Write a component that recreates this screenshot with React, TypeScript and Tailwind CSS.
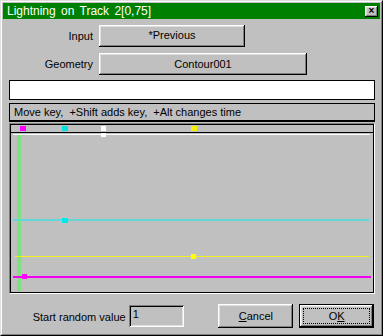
import React from "react";

const btn =
  "flex items-center justify-center bg-[#c0c0c0] shadow-[inset_-1px_-1px_0_#000,inset_1px_1px_0_#fff,inset_-2px_-2px_0_#808080,inset_2px_2px_0_#dfdfdf]";

function Graph() {
  return (
    <svg width={362} height={167} viewBox="11 125 362 167" className="block">
      <rect x={11} y={125} width={362} height={167} fill="#c0c0c0" />
      {/* key markers strip */}
      <rect x={20} y={126} width={6} height={5} fill="#ff00ff" />
      <rect x={62} y={126} width={6} height={5} fill="#00e0e0" />
      <rect x={101} y={126} width={5} height={5} fill="#ffffff" />
      <rect x={191} y={126} width={6} height={5} fill="#f0f000" />
      <rect x={11} y={132} width={362} height={1} fill="#000" />
      {/* green time line */}
      <rect x={17} y={134} width={4} height={157} fill="#80e080" />
      {/* white track */}
      <rect x={13} y={134} width={357} height={1} fill="#ffffff" />
      <rect x={101} y={133} width={5} height={4} fill="#ffffff" />
      {/* cyan */}
      <rect x={13} y={219} width={356} height={2} fill="#60d8d8" />
      <rect x={62} y={218} width={6} height={5} fill="#00e8e8" />
      {/* yellow */}
      <rect x={15} y={256} width={354} height={1} fill="#f0f020" />
      <rect x={191} y={254} width={5} height={5} fill="#ffff00" />
      {/* magenta */}
      <rect x={13} y={276} width={358} height={2} fill="#f000f0" />
      <rect x={22} y={274} width={5} height={5} fill="#ff00ff" />
    </svg>
  );
}

export default function App() {
  return (
    <div
      className="w-[383px] h-[336px] bg-[#c0c0c0] border border-t-[#dfdfdf] border-l-[#dfdfdf] border-r-black border-b-black text-black"
      style={{ fontFamily: '"Liberation Sans", Arial, sans-serif' }}
    >
      <div className="h-full border border-t-white border-l-white border-r-[#808080] border-b-[#808080] p-px flex flex-col">
        {/* title bar */}
        <div className="h-[16px] bg-[#008000] flex items-center justify-between pl-[4px] pr-[2px]">
          <span className="text-white text-[12px] leading-none [word-spacing:2px]">
            Lightning on Track 2[0,75]
          </span>
          <div className={`${btn} w-[13px] h-[11px] text-[10px] font-bold leading-none`}>
            ×
          </div>
        </div>
        <div className="flex flex-col px-[6px] text-[11px]">
          <div className="flex items-center mt-[6px] h-[22px]">
            <div className="w-[90px] text-right pr-[6px]">Input</div>
            <div className={`${btn} w-[146px] h-[22px] pb-[2px]`}>*Previous</div>
          </div>
          <div className="flex items-center mt-[6px] h-[22px]">
            <div className="w-[90px] text-right pr-[6px]">Geometry</div>
            <div className={`${btn} w-[208px] h-[22px]`}>Contour001</div>
          </div>
          <div className="mt-[5px] h-[20px] w-[366px] bg-white border border-black" />
          <div className="mt-[3px] h-[19px] w-[366px] border border-black border-b-2 flex items-center pl-[4px]">
            Move key,&nbsp; +Shift adds key,&nbsp; +Alt changes time
          </div>
          <div className="mt-[1px] w-[366px] h-[171px] border border-t-[#808080] border-l-[#808080] border-r-white border-b-white">
            <div className="w-[364px] h-[169px] border border-black">
              <Graph />
            </div>
          </div>
          <div className="flex items-center mt-[10px] h-[24px]">
            <div className="w-[120px] text-right pr-[3px] pt-[2px]">Start random value</div>
            <div className="w-[56px] h-[22px] shadow-[inset_1px_1px_0_#808080,inset_-1px_-1px_0_#fff,inset_2px_2px_0_#000,inset_-2px_-2px_0_#dfdfdf] pl-[4px] pt-[1px]">
              1
            </div>
            <div className={`${btn} ml-[34px] w-[75px] h-[24px]`}>
              <span>
                <span className="underline">C</span>ancel
              </span>
            </div>
            <div className="ml-[6px] w-[75px] h-[24px] border border-black">
              <div className={`${btn} w-full h-full p-[3px]`}>
                <div className="w-full h-full border border-dotted border-black flex items-center justify-center">
                  <span>
                    O<span className="underline">K</span>
                  </span>
                </div>
              </div>
            </div>
          </div>
        </div>
      </div>
    </div>
  );
}
